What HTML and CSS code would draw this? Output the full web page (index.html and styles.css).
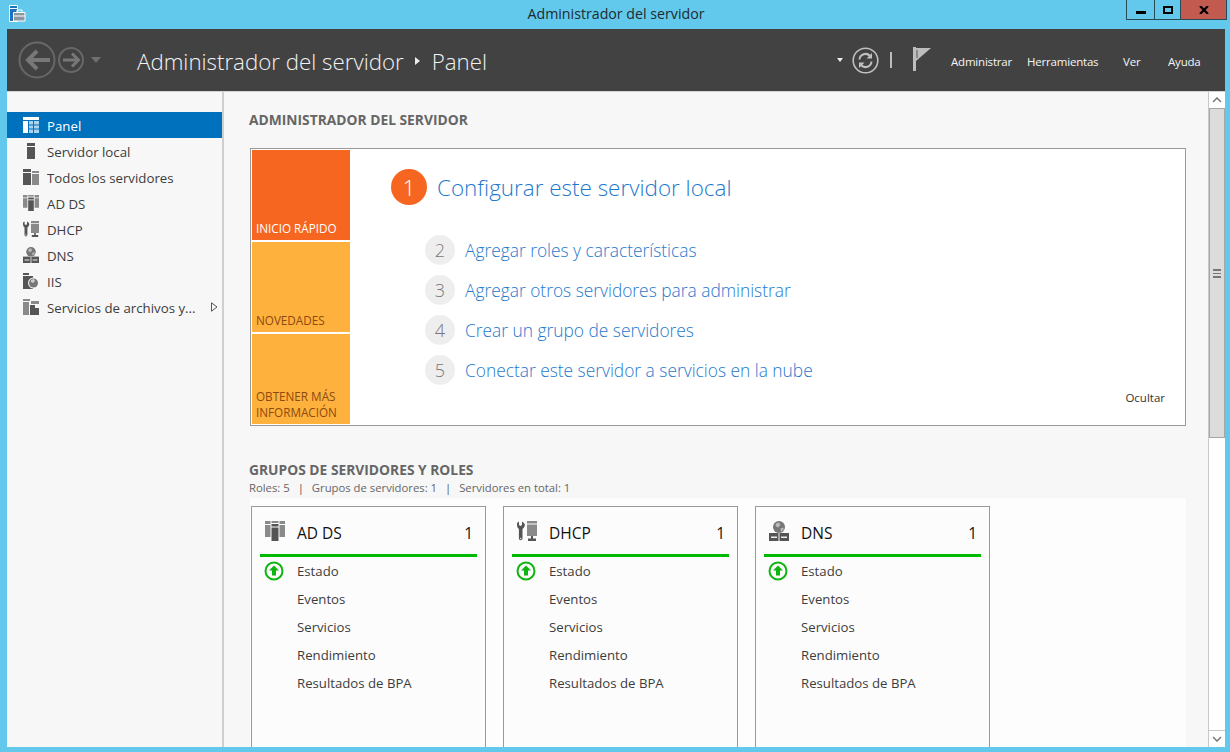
FILE: index.html
```html
<!DOCTYPE html>
<html lang="es">
<head>
<meta charset="utf-8">
<title>Administrador del servidor</title>
<link rel="stylesheet" href="styles.css">
</head>
<body>
<svg class="defs" width="0" height="0">
  <symbol id="i-adds" viewBox="0 0 20 20">
    <path fill="#8a8a8a" d="M0 0h5.500v3H0zM0 4h5.500v12H0zM14.500 0H20v3h-5.500zM14.500 4H20v12h-5.500zM6.500 0h7v2h-7z"/>
    <path fill="#555" d="M6.500 3h7v2.500h-7zM6.500 6.500h7V20h-7z"/>
  </symbol>
  <symbol id="i-dhcp" viewBox="0 0 20 20">
    <path fill="#555" d="M0 2l2-1.500V4l1.500 1L5 4V.5L7 2l1 2-1 2.500-1.500 1.500v9.500a1.800 1.800 0 0 1-3.600 0V8L.5 6.500 0 4z"/>
    <circle cx="3.700" cy="17.500" r=".8" fill="#ddd"/>
    <path fill="#8a8a8a" d="M10 0h10v2.500H10zM10 3.500h10V15H10z"/>
    <path fill="#555" d="M14 15h2v2.500h3V20h-8v-2.500h3z"/>
  </symbol>
  <symbol id="i-dns" viewBox="0 0 20 20">
    <circle cx="10" cy="6" r="6" fill="#777"/>
    <path fill="#bbb" d="M7 2.500l3-1 1.500 2.500-2.500 2.500-2.500-1.500zM11.500 7.500l3-1v2l-2.500 2.500z"/>
    <path fill="#555" d="M0 12h20v8H0z"/>
    <path fill="#eee" d="M2 15.500h6v1.500H2zM12 15.500h6v1.500h-6z"/>
    <path fill="#f7f7f7" d="M9.500 12h1v8h-1z"/>
  </symbol>
  <symbol id="i-flag" viewBox="0 0 19 24">
    <path fill="#bdbdbd" d="M0 0h3v24H0z"/>
    <path fill="#bdbdbd" d="M3 1h15L3 14z"/>
    <path fill="#555" d="M3.500 3h1v8h-1z"/>
  </symbol>
  <symbol id="i-ok" viewBox="0 0 20 20">
    <circle cx="10" cy="10" r="8.500" fill="none" stroke="#0eb50e" stroke-width="2"/>
    <path fill="#0eb50e" d="M10 4.500l5 5h-3v5H8v-5H5z"/>
  </symbol>
</svg>

<div class="window">
  <div class="titlebar">
    <svg class="app-icon" width="17" height="17" viewBox="0 0 17 17">
      <path fill="#1a73c0" d="M1 1h7v2H1zM1 4h7v12H1z"/>
      <path fill="none" stroke="#fff" d="M.500.500h8v16h-8zM.500 3.500h8"/>
      <path fill="#8a97a3" stroke="#fff" d="M4.500 7.500h11.500v8.500H4.500z"/>
      <path fill="none" stroke="#fff" d="M8 7V5h5v2M4.500 11h11.500"/>
    </svg>
    <div class="title">Administrador del servidor</div>
    <div class="winbtns">
      <div class="winbtn min"><span class="min-bar"></span></div>
      <div class="winbtn max"><span class="max-box"></span></div>
      <div class="winbtn close">
        <svg width="10" height="8" viewBox="0 0 10 8"><path fill="none" stroke="#000" stroke-width="2.200" d="M1 0l8 8M9 0L1 8"/></svg>
      </div>
    </div>
  </div>

  <header class="header">
    <div class="nav-arrows">
      <svg width="38" height="38" viewBox="0 0 38 38"><circle cx="19" cy="19" r="17.500" fill="none" stroke="#686868" stroke-width="2"/><path fill="none" stroke="#787878" stroke-width="4" d="M32 19H10M19 10l-9 9 9 9"/></svg>
      <svg class="fwd" width="26" height="26" viewBox="0 0 26 26"><circle cx="13" cy="13" r="12" fill="none" stroke="#686868" stroke-width="2"/><path fill="none" stroke="#787878" stroke-width="3" d="M5 13h15M14 6.500l6.500 6.500-6.500 6.500"/></svg>
      <span class="tri tri-grey"></span>
    </div>
    <div class="crumbs">
      <span>Administrador del servidor</span>
      <span class="crumb-sep"></span>
      <span>Panel</span>
    </div>
    <div class="tools">
      <span class="tri tri-white"></span>
      <svg class="refresh" width="27" height="27" viewBox="0 0 27 27">
        <circle cx="13.500" cy="13.500" r="12.300" fill="none" stroke="#c0c0c0" stroke-width="1.600"/>
        <path fill="none" stroke="#c0c0c0" stroke-width="2" d="M7.500 12.500a6 6 0 0 1 10.500-3.500l1 1M19.500 14.500a6 6 0 0 1-10.500 3.500l-1-1"/>
        <path fill="#c0c0c0" d="M20 6v5.500h-5.500zM7 21v-5.500h5.500z"/>
      </svg>
      <span class="pipe"></span>
      <svg class="flag" width="19" height="24"><use href="#i-flag"/></svg>
    </div>
    <nav class="menu">
      <span class="m1">Administrar</span>
      <span class="m2">Herramientas</span>
      <span class="m3">Ver</span>
      <span class="m4">Ayuda</span>
    </nav>
  </header>

  <div class="body">
    <aside class="sidebar">
      <div class="nav-item active">
        <svg class="nav-icon" width="16" height="16" viewBox="0 0 16 16">
          <path fill="#fff" d="M0 0h16v3H0zM0 4h5v12H0z"/>
          <path fill="#a9d3ee" d="M6 4h4v3.500H6zM11 4h5v3.500h-5zM6 8.500h4v3H6zM11 8.500h5v3h-5zM6 12.500h4V16H6zM11 12.500h5V16h-5z"/>
        </svg>
        <span>Panel</span>
      </div>
      <div class="nav-item">
        <svg class="nav-icon" width="16" height="16" viewBox="0 0 16 16"><path fill="#555" d="M4 0h8v3H4zM4 4h8v12H4z"/></svg>
        <span>Servidor local</span>
      </div>
      <div class="nav-item">
        <svg class="nav-icon" width="16" height="16" viewBox="0 0 16 16"><path fill="#555" d="M0 0h8v3H0zM0 4h8v12H0z"/><path fill="#8a8a8a" d="M9 2h7v2H9zM9 5h7v11H9z"/></svg>
        <span>Todos los servidores</span>
      </div>
      <div class="nav-item">
        <svg class="nav-icon" width="16" height="16"><use href="#i-adds"/></svg>
        <span>AD DS</span>
      </div>
      <div class="nav-item">
        <svg class="nav-icon" width="16" height="16"><use href="#i-dhcp"/></svg>
        <span>DHCP</span>
      </div>
      <div class="nav-item">
        <svg class="nav-icon" width="16" height="16"><use href="#i-dns"/></svg>
        <span>DNS</span>
      </div>
      <div class="nav-item">
        <svg class="nav-icon" width="16" height="16" viewBox="0 0 16 16"><path fill="#555" d="M0 0h6v2H0zM0 3h10v13H0z"/><circle cx="10.500" cy="10" r="5.500" fill="#f7f7f7"/><circle cx="10.500" cy="10" r="4.500" fill="#777"/><path fill="#ccc" d="M8 7l3-1 1 2-2 2-2-1z"/></svg>
        <span>IIS</span>
      </div>
      <div class="nav-item">
        <svg class="nav-icon" width="16" height="16" viewBox="0 0 16 16"><path fill="#8a8a8a" d="M0 0h7v2H0zM0 3h6v13H0zM8 2h8v3H8z"/><path fill="#555" d="M7 6h9v10H7z"/><path fill="#f7f7f7" d="M12 6h4v3h-4z"/></svg>
        <span class="nav-long">Servicios de archivos y...</span>
        <svg class="nav-caret" width="7" height="10" viewBox="0 0 7 10"><path fill="none" stroke="#555" d="M.500.800v8.400L6 5z"/></svg>
      </div>
    </aside>

    <main class="main">
      <h2 class="section-head">ADMINISTRADOR DEL SERVIDOR</h2>
      <section class="welcome">
        <div class="tiles">
          <div class="tile tile-on">INICIO RÁPIDO</div>
          <div class="tile">NOVEDADES</div>
          <div class="tile">OBTENER MÁS<br>INFORMACIÓN</div>
        </div>
        <div class="steps">
          <div class="step-main"><span class="num-big">1</span><span>Configurar este servidor local</span></div>
          <div class="step"><span class="num">2</span><span>Agregar roles y características</span></div>
          <div class="step"><span class="num">3</span><span>Agregar otros servidores para administrar</span></div>
          <div class="step"><span class="num">4</span><span>Crear un grupo de servidores</span></div>
          <div class="step"><span class="num">5</span><span>Conectar este servidor a servicios en la nube</span></div>
          <div class="hide">Ocultar</div>
        </div>
      </section>

      <h2 class="section-head roles-head">GRUPOS DE SERVIDORES Y ROLES</h2>
      <p class="summary">Roles: 5 <i>|</i> Grupos de servidores: 1 <i>|</i> Servidores en total: 1</p>

      <section class="cards">
        <article class="card">
          <div class="card-head"><svg class="card-icon" width="20" height="20"><use href="#i-adds"/></svg><span class="card-name">AD DS</span><span class="card-count">1</span></div>
          <div class="card-row"><svg class="ok" width="20" height="20"><use href="#i-ok"/></svg><span>Estado</span></div>
          <div class="card-row"><span>Eventos</span></div>
          <div class="card-row"><span>Servicios</span></div>
          <div class="card-row"><span>Rendimiento</span></div>
          <div class="card-row"><span>Resultados de BPA</span></div>
        </article>
        <article class="card">
          <div class="card-head"><svg class="card-icon" width="20" height="20"><use href="#i-dhcp"/></svg><span class="card-name">DHCP</span><span class="card-count">1</span></div>
          <div class="card-row"><svg class="ok" width="20" height="20"><use href="#i-ok"/></svg><span>Estado</span></div>
          <div class="card-row"><span>Eventos</span></div>
          <div class="card-row"><span>Servicios</span></div>
          <div class="card-row"><span>Rendimiento</span></div>
          <div class="card-row"><span>Resultados de BPA</span></div>
        </article>
        <article class="card">
          <div class="card-head"><svg class="card-icon" width="20" height="20"><use href="#i-dns"/></svg><span class="card-name">DNS</span><span class="card-count">1</span></div>
          <div class="card-row"><svg class="ok" width="20" height="20"><use href="#i-ok"/></svg><span>Estado</span></div>
          <div class="card-row"><span>Eventos</span></div>
          <div class="card-row"><span>Servicios</span></div>
          <div class="card-row"><span>Rendimiento</span></div>
          <div class="card-row"><span>Resultados de BPA</span></div>
        </article>
      </section>
    </main>

    <div class="scrollbar">
      <div class="sb-btn"><svg width="10" height="6" viewBox="0 0 10 6"><path fill="none" stroke="#777" stroke-width="1.500" d="M1 5l4-4 4 4"/></svg></div>
      <div class="sb-thumb"><span class="grip"></span></div>
      <div class="sb-rest"></div>
      <div class="sb-btn"><svg width="10" height="6" viewBox="0 0 10 6"><path fill="none" stroke="#777" stroke-width="1.500" d="M1 1l4 4 4-4"/></svg></div>
    </div>
  </div>
</div>
</body>
</html>
```

FILE: styles.css
```css
* { box-sizing: border-box; }
html, body { margin: 0; height: 100%; overflow: hidden; }
body {
  background: #63c9ec;
  font-family: "Open Sans", "Noto Sans", "Liberation Sans", sans-serif;
  font-size: 12px;
  color: #333;
}
.defs { display: block; height: 0; }
.window { display: flex; flex-direction: column; height: 752px; padding: 0 5px 5px 7px; }

.titlebar {
  position: relative;
  flex: 0 0 29px;
  display: flex;
  justify-content: center;
  align-items: flex-start;
}
.app-icon { position: absolute; left: 2px; top: 5px; }
.title { font-size: 14.2px; line-height: 28px; color: #1d2b31; }
.winbtns {
  position: absolute;
  right: -2px;
  top: 0;
  display: flex;
  height: 20px;
  border: 1px solid #2a4a57;
  border-top: 0;
}
.winbtn { display: flex; align-items: center; justify-content: center; height: 19px; }
.min { width: 28px; border-right: 1px solid #2a4a57; }
.max { width: 26px; border-right: 1px solid #2a4a57; }
.close { width: 45px; background: #c25a50; }
.min-bar { width: 10px; height: 3px; background: #000; margin-top: 6px; }
.max-box { width: 10px; height: 8px; border: 2px solid #000; }

.header {
  flex: 0 0 63px;
  display: flex;
  align-items: center;
  background: #424242;
  border-bottom: 1px solid #d4d4d4;
  padding-left: 11px;
}
.nav-arrows { display: flex; align-items: center; width: 119px; }
.fwd { margin-left: 2px; }
.tri { display: inline-block; width: 0; height: 0; border-style: solid; border-color: transparent; }
.tri-grey { border-width: 6px 5px 0; border-top-color: #707070; margin-left: 7px; margin-top: -1px; }
.tri-white { border-width: 4px 3.500px 0; border-top-color: #eee; }
.crumbs { display: flex; align-items: center; font-size: 22.3px; font-weight: 300; color: #f2f2f2; margin-top: 2px; }
.crumb-sep {
  width: 0; height: 0; margin: 0 12px 0 11px;
  border-style: solid; border-width: 4px 0 4px 5px;
  border-color: transparent transparent transparent #eee;
}
.tools { display: flex; align-items: center; margin-left: auto; }
.refresh { margin-left: 9px; }
.pipe { width: 2px; height: 16px; background: #bbb; margin-left: 11px; }
.flag { margin-left: 21px; margin-top: -3px; }
.menu { display: flex; align-items: center; color: #f5f5f5; font-size: 11.5px; letter-spacing: -.2px; margin: 2px 26px 0 19px; }
.m1 { width: 76px; }
.m2 { width: 96px; }
.m3 { width: 45px; }
.m4 { width: 31px; }

.body { flex: 1; display: flex; min-height: 0; background: #f7f7f7; }
.sidebar { flex: 0 0 217px; border-right: 2px solid #cfcfcf; padding-top: 20px; }
.nav-item { display: flex; align-items: center; height: 26px; padding-left: 16px; font-size: 13.25px; color: #3c3c3c; }
.nav-item span { padding-top: 2px; }
.nav-item.active { background: #0071bc; color: #fff; }
.nav-icon { flex: none; margin-right: 8px; }
.nav-long { white-space: nowrap; }
.nav-caret { margin-left: auto; margin-right: 4px; }

.main { flex: 1; min-width: 0; overflow: hidden; padding: 19px 21px 0 25px; }
.section-head { margin: 0; font-size: 13.8px; line-height: 18px; font-weight: 700; color: #666; }
.welcome {
  display: flex;
  width: 936px;
  height: 278px;
  margin: 19px 0 0 1px;
  padding: 1px;
  border: 1px solid #999;
  background: #fff;
}
.tiles { flex: 0 0 98px; display: flex; flex-direction: column; gap: 2px; }
.tile {
  flex: 1;
  display: flex;
  align-items: flex-end;
  padding: 0 0 4px 4px;
  background: #ffb13d;
  color: #8a4a10;
  font-size: 11.7px;
  line-height: 16px;
}
.tile-on { background: #f66621; color: #fff; }
.steps { position: relative; flex: 1; padding: 19px 0 0 41px; color: #1e79cc; }
.step-main { display: flex; align-items: center; gap: 10px; height: 36px; font-size: 22.45px; font-weight: 300; margin-bottom: 30px; }
.num-big {
  display: flex; align-items: center; justify-content: center;
  width: 36px; height: 36px; border-radius: 50%;
  background: #f66621; color: #fff; font-size: 22px; font-weight: 300;
}
.step { display: flex; align-items: center; gap: 10px; height: 30px; margin: 0 0 10px 34px; font-size: 17.35px; font-weight: 300; }
.num {
  display: flex; align-items: center; justify-content: center;
  width: 30px; height: 30px; border-radius: 50%;
  background: #eee; color: #777; font-size: 18px; font-weight: 300;
}
.hide { position: absolute; right: 19px; bottom: 19px; font-size: 11.5px; color: #333; }

.roles-head { margin-top: 35px; }
.summary { margin: 1px 0 0; font-size: 11.3px; line-height: 16px; color: #666; }
.summary i { font-style: normal; color: #555; margin: 0 5px; }
.cards {
  display: flex;
  gap: 17px;
  width: 936px;
  margin: 2px 0 0 1px;
  padding: 8px 0 0 1px;
  background: #fdfdfd;
  height: 300px;
}
.card { flex: 0 0 235px; border: 1px solid #999; background: #fcfcfc; padding: 0 8px; }
.card-head {
  display: flex;
  align-items: center;
  height: 50px;
  border-bottom: 3px solid #00ba00;
  padding: 4px 4px 0 5px;
  color: #111;
}
.card-icon { margin-top: -4px; }
.card-name { margin-left: 12px; font-size: 15.5px; }
.card-count { margin-left: auto; font-size: 15.5px; }
.card-row { position: relative; display: flex; align-items: center; height: 28px; padding-left: 37px; font-size: 13.2px; color: #3c3c3c; }
.card-row:first-of-type { margin-top: 1px; }
.ok { position: absolute; left: 4px; top: 4px; }

.scrollbar { flex: 0 0 17px; display: flex; flex-direction: column; background: #fff; border-left: 1px solid #c8c8c8; }
.sb-btn { flex: 0 0 16px; display: flex; align-items: center; justify-content: center; background: #fff; }
.sb-thumb {
  flex: 0 0 330px;
  display: flex; align-items: center; justify-content: center;
  background: #dcdcdc;
  border: 1px solid #a6a6a6;
}
.sb-rest { flex: 1; border-bottom: 1px solid #c8c8c8; }
.grip { width: 8px; height: 9px; background: repeating-linear-gradient(#777 0 2px, transparent 2px 3.500px); }
```
